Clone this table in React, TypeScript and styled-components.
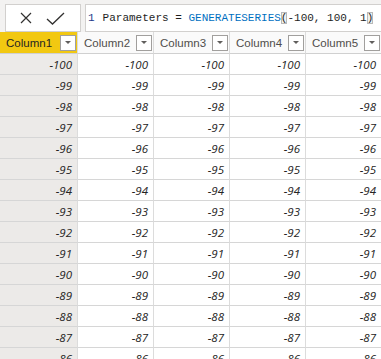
import React from "react";
import styled, { createGlobalStyle } from "styled-components";

const Global = createGlobalStyle`
  html, body { margin: 0; padding: 0; background: #ffffff; }
  body { width: 381px; height: 359px; overflow: hidden; }
`;

const Page = styled.div`
  width: 381px;
  height: 359px;
  overflow: hidden;
  display: flex;
  flex-direction: column;
  background: #ffffff;
`;

const FormulaBar = styled.div`
  height: 36px;
  box-sizing: border-box;
  display: flex;
  gap: 4px;
  padding: 4px 0 0 5px;
  background: #f3f2f1;
`;

const ActionBox = styled.div`
  width: 76px;
  height: 28px;
  box-sizing: border-box;
  border: 1px solid #d2d0ce;
  background: #ffffff;
  display: flex;
  align-items: center;
  justify-content: center;
  gap: 14px;
  padding-right: 2px;
`;

const ExprBox = styled.div`
  flex: 1;
  height: 28px;
  box-sizing: border-box;
  border: 1px solid #d2d0ce;
  border-right: none;
  background: #ffffff;
  display: flex;
  align-items: center;
  padding-left: 2px;
  font-family: "Liberation Mono", "DejaVu Sans Mono", monospace;
  font-size: 11px;
  color: #1e1e1e;
  white-space: pre;
`;

const LineNo = styled.span`
  color: #1f3a8a;
  margin-right: 8px;
`;

const Fn = styled.span`
  color: #0070c1;
`;

const Bracket = styled.span`
  background: #eef0ee;
  outline: 1px solid #b9b9b9;
  outline-offset: -1px;
`;

const Grid = styled.div`
  display: grid;
  grid-template-columns: 78px repeat(4, 76px);
`;

const HeadCell = styled.div<{ $active?: boolean }>`
  height: 22px;
  box-sizing: border-box;
  border-right: 1px solid #dcdcdc;
  border-bottom: 1px solid #d0d0d0;
  background: ${(p) => (p.$active ? "#f2c811" : "#fafafa")};
  display: flex;
  align-items: center;
  justify-content: space-between;
  padding: 0 1px 0 6px;
  font-family: "Liberation Sans", Arial, sans-serif;
  font-size: 11.5px;
  color: ${(p) => (p.$active ? "#252423" : "#4f4d4b")};
`;

const DropBtn = styled.span`
  width: 16px;
  height: 16px;
  box-sizing: border-box;
  border: 1px solid #a19f9d;
  background: #ffffff;
  display: flex;
  align-items: center;
  justify-content: center;
  &::after {
    content: "";
    border-left: 3px solid transparent;
    border-right: 3px solid transparent;
    border-top: 3px solid #605e5c;
  }
`;

const Cell = styled.div<{ $first?: boolean }>`
  height: 21px;
  box-sizing: border-box;
  border-right: 1px solid #dcdcdc;
  border-bottom: 1px solid #d6d6d6;
  background: ${(p) => (p.$first ? "#eceae8" : "#ffffff")};
  display: flex;
  align-items: center;
  justify-content: flex-end;
  padding-right: 5px;
  font-family: "Open Sans", "Noto Sans", sans-serif;
  font-style: italic;
  font-size: 11.5px;
  color: #252423;
`;

const columns = ["Column1", "Column2", "Column3", "Column4", "Column5"];
const values = Array.from({ length: 15 }, (_, i) => -100 + i);

export default function App() {
  return (
    <Page>
      <Global />
      <FormulaBar>
        <ActionBox>
          <svg width="12" height="12" viewBox="0 0 12 12">
            <path d="M1 1 L11 11 M11 1 L1 11" stroke="#323130" strokeWidth="1.2" fill="none" />
          </svg>
          <svg width="19" height="13" viewBox="0 0 19 13">
            <path d="M1 7 L6.5 12 L18 1" stroke="#323130" strokeWidth="1.3" fill="none" />
          </svg>
        </ActionBox>
        <ExprBox>
          <LineNo>1</LineNo>
          {"Parameters = "}
          <Fn>GENERATESERIES</Fn>
          <Bracket>(</Bracket>
          {"-100, 100, 1"}
          <Bracket>)</Bracket>
        </ExprBox>
      </FormulaBar>
      <Grid>
        {columns.map((c, i) => (
          <HeadCell key={c} $active={i === 0}>
            <span>{c}</span>
            <DropBtn />
          </HeadCell>
        ))}
        {values.map((v) =>
          columns.map((c, i) => (
            <Cell key={c + v} $first={i === 0}>
              {v}
            </Cell>
          ))
        )}
      </Grid>
    </Page>
  );
}
